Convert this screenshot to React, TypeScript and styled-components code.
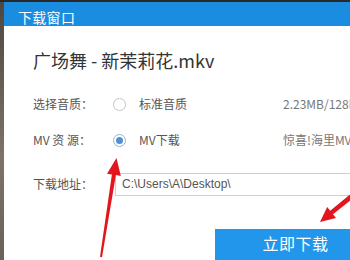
import React from "react";
import styled, { createGlobalStyle } from "styled-components";

const GlobalStyle = createGlobalStyle`
  html, body {
    margin: 0;
    width: 350px;
    height: 260px;
    overflow: hidden;
    font-family: "Noto Sans CJK SC", "Noto Sans", sans-serif;
  }
`;

const Screen = styled.div`
  position: relative;
  display: flex;
  width: 350px;
  height: 260px;
  padding-top: 2px;
  box-sizing: border-box;
  background: #2b2a28;
  overflow: hidden;
`;

const Edge = styled.div`
  flex: 0 0 4px;
  background: linear-gradient(#4d4740, #7d7466 60%, #6a6258);
`;

const Dialog = styled.div`
  flex: 0 0 420px;
  display: flex;
  flex-direction: column;
  background: #fff;
`;

const TitleBar = styled.div`
  height: 35px;
  box-sizing: border-box;
  display: flex;
  align-items: center;
  padding: 6px 0 0 14px;
  background: #1a8de0;
  color: #fff;
  font-size: 14px;
  line-height: 18px;
  letter-spacing: 0.3px;
`;

const Body = styled.div`
  padding: 22px 0 0 29px;
`;

const FileName = styled.div`
  font-size: 18px;
  line-height: 24px;
  color: #333;
`;

const Form = styled.div`
  display: grid;
  grid-template-columns: 80px 170px auto;
  grid-auto-rows: 36px;
  align-items: center;
  margin-top: 14px;
`;

const Label = styled.div`
  font-size: 12px;
  line-height: 16px;
  color: #555;
  white-space: nowrap;
`;

const Option = styled.label`
  display: flex;
  align-items: center;
  gap: 13px;
  font-size: 12px;
  line-height: 16px;
  color: #555;
`;

const Radio = styled.span<{ checked?: boolean }>`
  position: relative;
  width: 13px;
  height: 13px;
  box-sizing: border-box;
  border-radius: 50%;
  border: 1px solid ${(p) => (p.checked ? "#8db6de" : "#c4c4c4")};
  background: #fff;
  &::after {
    content: "";
    display: ${(p) => (p.checked ? "block" : "none")};
    position: absolute;
    left: 2px;
    top: 2px;
    width: 7px;
    height: 7px;
    border-radius: 50%;
    background: #4f8fd2;
  }
`;

const Info = styled.div`
  font-size: 12px;
  line-height: 16px;
  color: #777;
  white-space: nowrap;
`;

const AddressRow = styled.div`
  display: grid;
  grid-template-columns: 82px 1fr;
  align-items: center;
  height: 36px;
  margin-top: 8px;
`;

const PathInput = styled.div`
  height: 23px;
  box-sizing: border-box;
  border: 1px solid #cfcfcf;
  padding-left: 6px;
  display: flex;
  align-items: center;
  font-family: "Liberation Sans", Arial, sans-serif;
  font-size: 12px;
  color: #555;
`;

const ButtonRow = styled.div`
  padding-left: 182px;
  margin-top: 27px;
`;

const DownloadButton = styled.button`
  width: 161px;
  height: 36px;
  border: none;
  background: #2196ea;
  color: #fff;
  font-family: "Noto Sans CJK SC", sans-serif;
  font-size: 16px;
  padding: 0 0 9px;
  letter-spacing: 0.5px;
`;

const Marks = styled.svg`
  position: absolute;
  left: 0;
  top: 0;
  pointer-events: none;
`;

export default () => (
  <>
    <GlobalStyle />
    <Screen>
      <Edge />
      <Dialog>
        <TitleBar>下载窗口</TitleBar>
        <Body>
          <FileName>广场舞 - 新茉莉花.mkv</FileName>
          <Form>
            <Label>选择音质：</Label>
            <Option>
              <Radio />
              标准音质
            </Option>
            <Info>2.23MB/128kbps</Info>
            <Label>MV 资 源：</Label>
            <Option>
              <Radio checked />
              MV下载
            </Option>
            <Info>惊喜!海里MV</Info>
          </Form>
          <AddressRow>
            <Label>下载地址：</Label>
            <PathInput>C:\Users\A\Desktop\</PathInput>
          </AddressRow>
          <ButtonRow>
            <DownloadButton>立即下载</DownloadButton>
          </ButtonRow>
        </Body>
      </Dialog>
      <Marks width="350" height="260" viewBox="0 0 350 260">
        <polygon
          fill="#e3161d"
          points="116.5,158 120.8,175.9 115.9,175.1 102,257.2 100,256.8 111.9,174.5 107,173.7"
        />
        <polygon
          fill="#e3161d"
          points="320,222 327.2,207.1 330.2,210.8 350.4,194.1 353.6,197.9 333,214.2 336,217.9"
        />
      </Marks>
    </Screen>
  </>
);
